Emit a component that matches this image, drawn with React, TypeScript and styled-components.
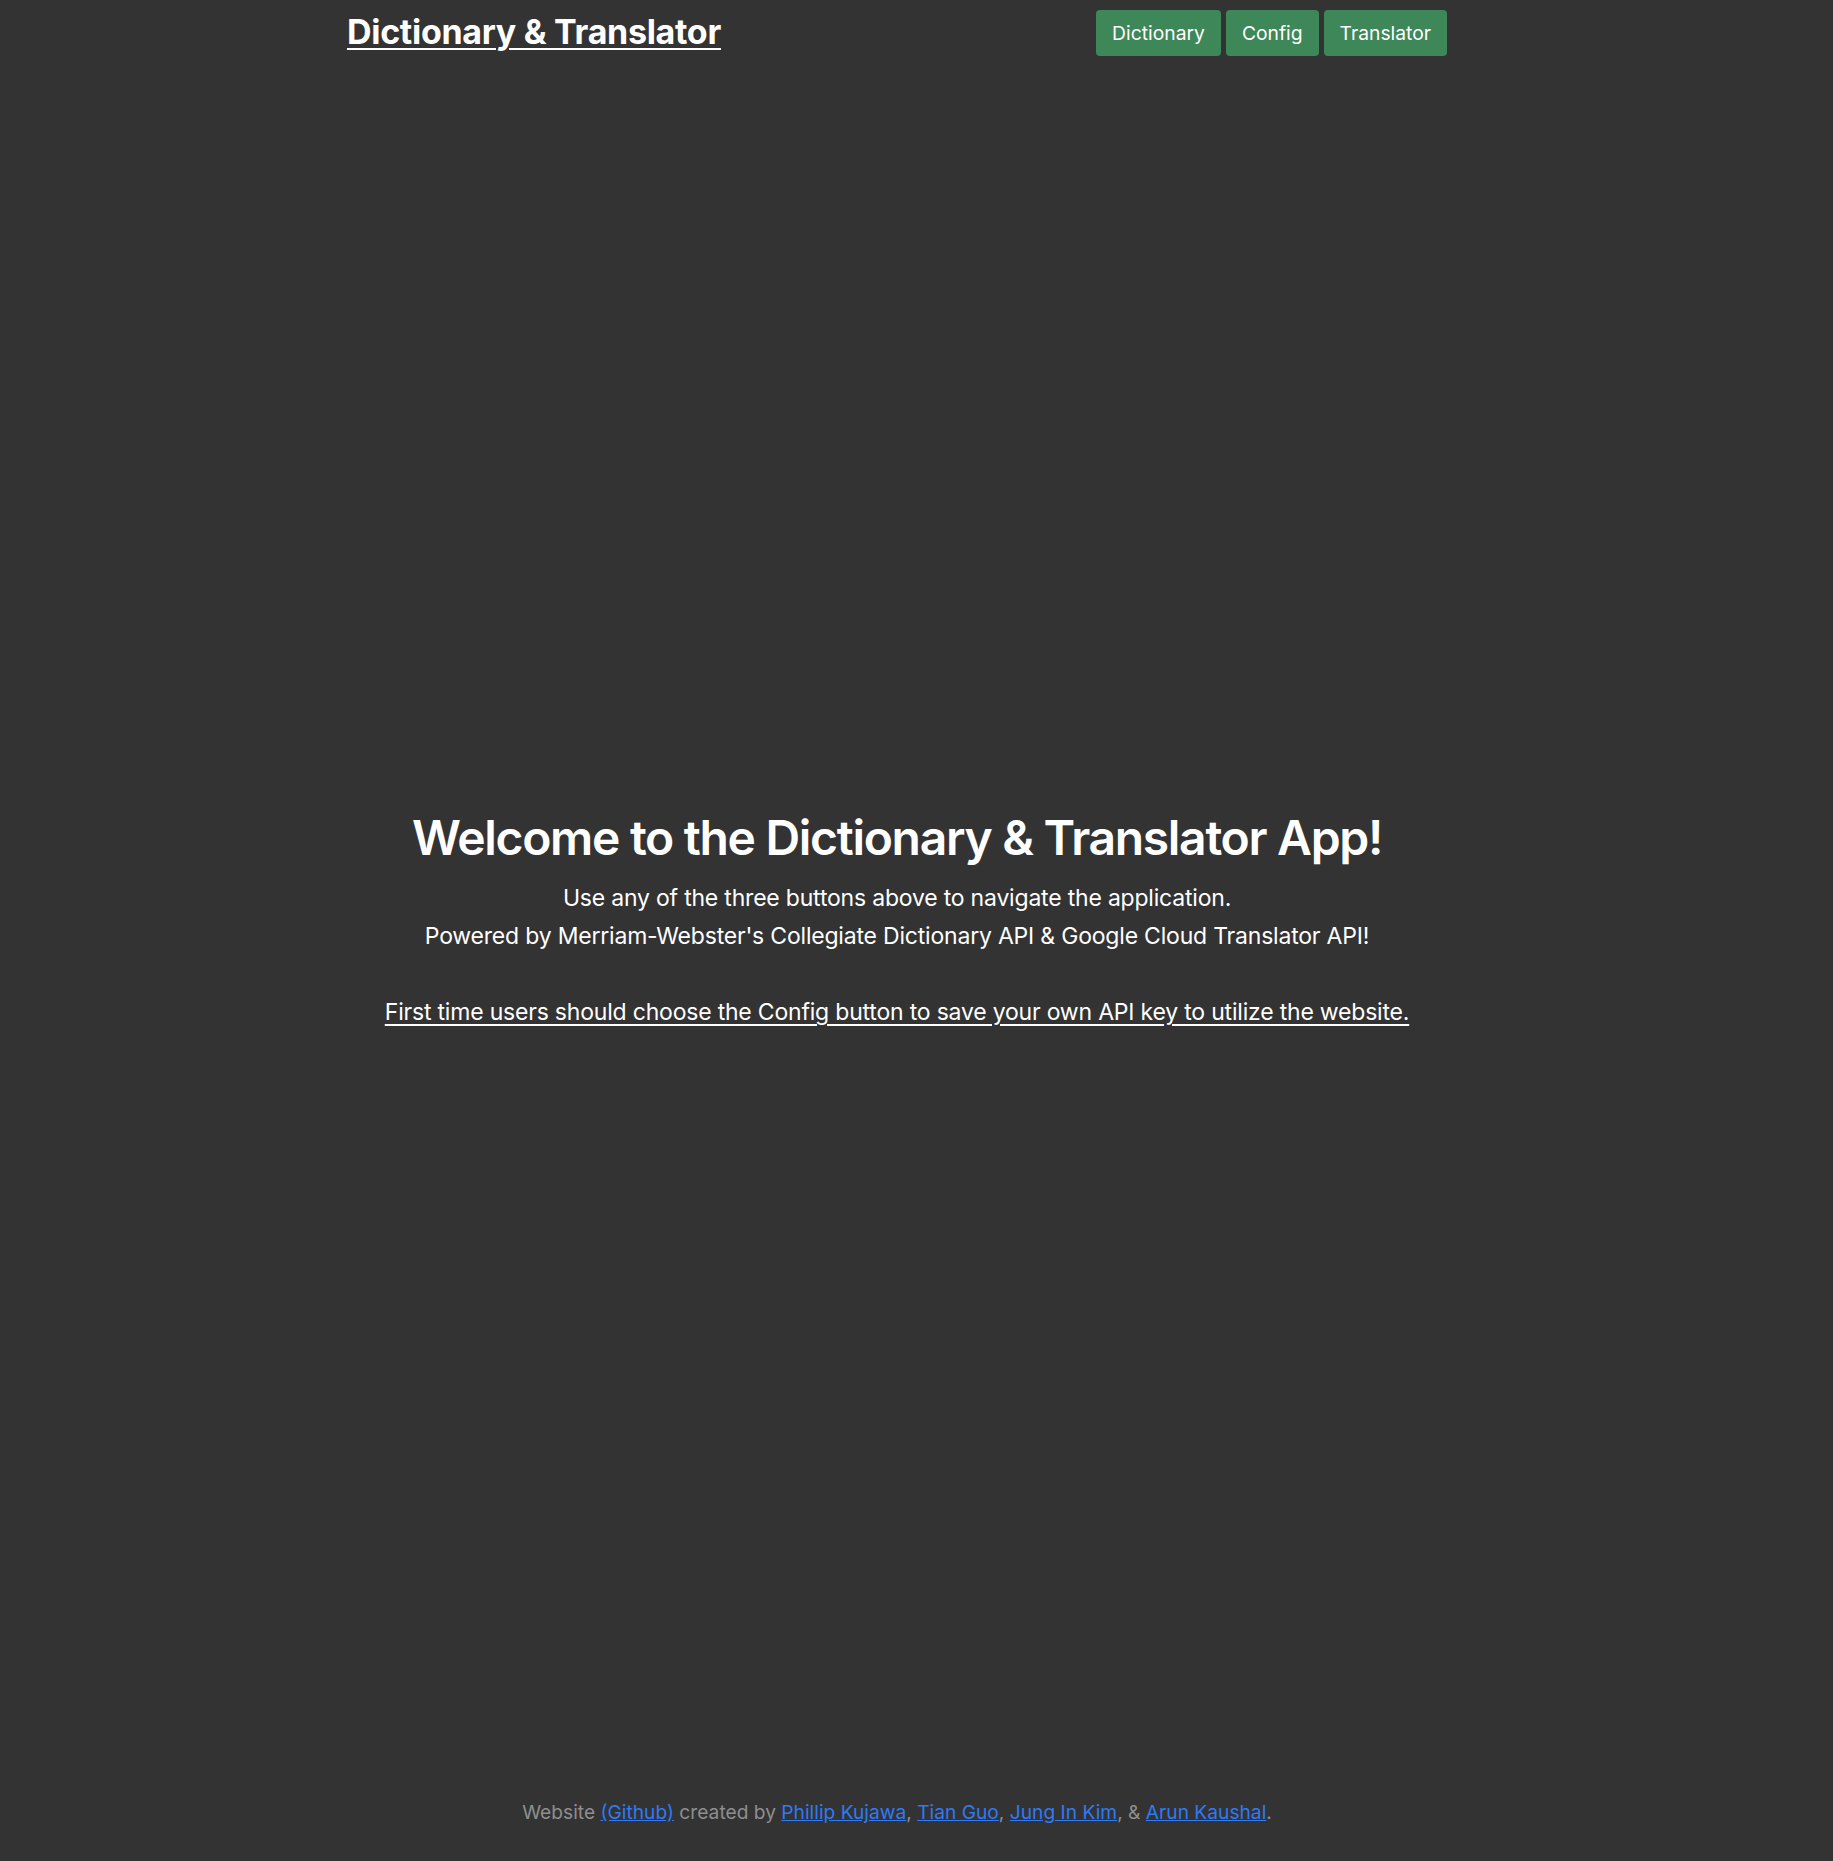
import React from "react";
import styled, { createGlobalStyle } from "styled-components";

const GlobalStyle = createGlobalStyle`
  html, body {
    margin: 0;
    padding: 0;
    background: #333333;
  }
  body {
    font-family: Inter, "Noto Sans", "Liberation Sans", sans-serif;
    color: #ffffff;
  }
`;

const Page = styled.div`
  min-height: 100vh;
  box-sizing: border-box;
  padding-right: 39px;
  display: flex;
  flex-direction: column;
  align-items: center;
`;

const Header = styled.header`
  width: 1100px;
  display: flex;
  justify-content: space-between;
  align-items: flex-start;
`;

const Title = styled.a`
  margin-top: 12px;
  font-size: 34px;
  font-weight: 700;
  color: #ffffff;
  text-decoration: underline;
  text-decoration-thickness: 2px;
  text-underline-offset: 4px;
  line-height: 40px;
  letter-spacing: -0.3px;
`;

const Nav = styled.nav`
  display: flex;
  gap: 5px;
  margin-top: 10px;
`;

const NavButton = styled.button`
  height: 46px;
  padding: 0 16px;
  border: none;
  border-radius: 4px;
  background: #3e8759;
  color: #ffffff;
  font-family: inherit;
  font-size: 19.3px;
  font-weight: 400;
  cursor: pointer;
`;

const Main = styled.main`
  flex: 1;
  display: flex;
  flex-direction: column;
  align-items: center;
  justify-content: center;
  text-align: center;
  padding-bottom: 14px;
`;

const Heading = styled.h1`
  margin: 0 0 12px;
  font-size: 48px;
  font-weight: 600;
  letter-spacing: -1.3px;
  line-height: 58px;
`;

const Line = styled.p`
  margin: 0;
  font-size: 23px;
  line-height: 38px;
  letter-spacing: -0.2px;
`;

const Notice = styled.p`
  margin: 38px 0 0;
  font-size: 23px;
  line-height: 38px;
  letter-spacing: -0.2px;
  text-decoration: underline;
  text-underline-offset: 4px;
`;

const Footer = styled.footer`
  padding: 0 0 35px;
  font-size: 19.2px;
  color: #8e8e8e;
  line-height: 28px;
`;

const FooterLink = styled.a`
  color: #2f7af5;
  text-decoration: underline;
`;

export default function App() {
  return (
    <>
      <GlobalStyle />
      <Page>
        <Header>
          <Title>Dictionary &amp; Translator</Title>
          <Nav>
            <NavButton>Dictionary</NavButton>
            <NavButton>Config</NavButton>
            <NavButton>Translator</NavButton>
          </Nav>
        </Header>
        <Main>
          <Heading>Welcome to the Dictionary &amp; Translator App!</Heading>
          <Line>Use any of the three buttons above to navigate the application.</Line>
          <Line>
            Powered by Merriam-Webster's Collegiate Dictionary API &amp; Google Cloud Translator API!
          </Line>
          <Notice>
            First time users should choose the Config button to save your own API key to utilize the website.
          </Notice>
        </Main>
        <Footer>
          Website <FooterLink>(Github)</FooterLink> created by <FooterLink>Phillip Kujawa</FooterLink>,{" "}
          <FooterLink>Tian Guo</FooterLink>, <FooterLink>Jung In Kim</FooterLink>, &amp;{" "}
          <FooterLink>Arun Kaushal</FooterLink>.
        </Footer>
      </Page>
    </>
  );
}
